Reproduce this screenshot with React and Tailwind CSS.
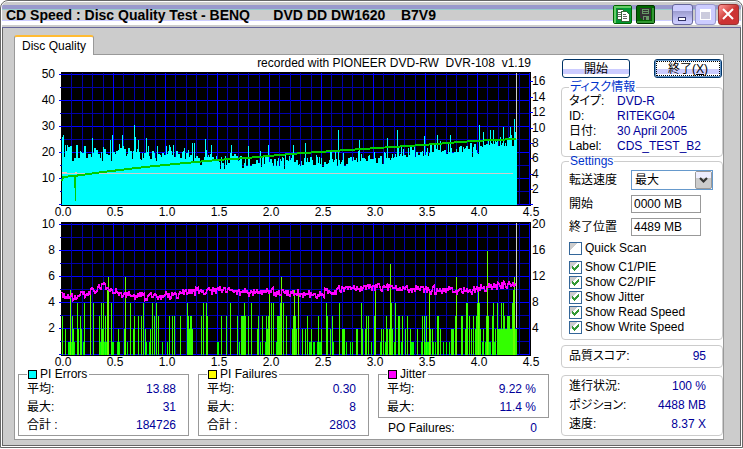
import React, { useState } from 'react';
import clsx from 'clsx';

const COLUMNS_PER_GB = 104;
const PLOT = { left: 46, top: 2, width: 470, height: 134, zeroX: 47, zeroY: 134 };
const COLUMNS = 455;

// Small repeatable noise source, so the curves look the same on every render
function createNoise(seed) {
  let state = seed;
  return () => {
    state = (state * 1664525 + 1013904223) % 4294967296;
    return state / 4294967296;
  };
}

// Linear interpolation through [column, value] points
function interpolate(points, col) {
  for (let i = 1; i < points.length; i++) {
    const [x1, y1] = points[i];
    const [x0, y0] = points[i - 1];
    if (col <= x1) return y0 + ((y1 - y0) * (col - x0)) / (x1 - x0);
  }
  return points[points.length - 1][1];
}

const PIE_TREND = [[0, 46], [60, 47], [90, 48], [130, 42], [165, 40], [210, 40], [240, 40], [300, 41], [330, 45], [380, 51], [410, 49], [430, 56], [454, 58]];
const PIE_SPIKES = {
  0: 63, 1: 65, 3: 55, 5: 55, 30: 62, 48: 60, 50: 65, 60: 65, 72: 75, 73: 63, 76: 60, 84: 62,
  107: 55, 111: 55, 130: 57, 132: 57, 143: 61, 149: 55, 158: 31, 162: 31, 169: 55, 186: 54, 206: 55,
  231: 55, 243: 57, 275: 34, 276: 70, 278: 36, 297: 60, 325: 62, 335: 70, 362: 64, 375: 65,
  388: 65, 417: 75, 421: 68, 428: 70, 431: 70, 441: 73, 448: 73, 452: 81, 453: 68, 454: 66,
};

const PIF_BARS = [
  [0, 3], [3, 2], [6, 1], [7, 1], [8, 5], [9, 1], [10, 3], [11, 2], [12, 1], [15, 4], [16, 2], [18, 3], [19, 2], [22, 4], [21, 1],
  [28, 5], [31, 4], [37, 3], [38, 1], [39, 4], [40, 2], [41, 4], [42, 1], [43, 3], [44, 1], [45, 5], [46, 6], [49, 4], [50, 1], [51, 1],
  [55, 1], [56, 2], [57, 1], [62, 2], [63, 6], [65, 1], [68, 4], [71, 2], [72, 3], [76, 3], [79, 3], [81, 4], [83, 2], [84, 1],
  [87, 1], [88, 2], [90, 4], [92, 3], [94, 4], [96, 3], [100, 1], [105, 1], [107, 3], [110, 3], [112, 3], [118, 3],
  [125, 4], [126, 3], [127, 2], [128, 3], [129, 3], [130, 2], [139, 3], [141, 4], [144, 4], [145, 3], [155, 1], [156, 1],
  [159, 3], [164, 3], [168, 4], [175, 3], [177, 1], [179, 3], [180, 3], [181, 3], [182, 4], [183, 3], [186, 3], [189, 4],
  [195, 2], [196, 3], [198, 1], [200, 3], [203, 1], [204, 3], [205, 2], [206, 3], [207, 5], [209, 4], [211, 4],
  [214, 1], [215, 3], [216, 3], [217, 3], [218, 4], [219, 6], [221, 4], [224, 3],
  [230, 2], [231, 3], [232, 5], [233, 3], [234, 2], [236, 5], [240, 2], [243, 2], [245, 3], [247, 1], [248, 1], [249, 2], [251, 1], [252, 1],
  [255, 1], [256, 3], [257, 1], [258, 1], [259, 2], [264, 4], [265, 3], [268, 2], [270, 3], [271, 1], [277, 4],
  [280, 2], [281, 2], [282, 2], [284, 1], [288, 1], [290, 1], [294, 2], [295, 2], [299, 4], [300, 2], [303, 2], [304, 3], [306, 3], [309, 1],
  [312, 3], [313, 5], [318, 1], [319, 2], [321, 2], [323, 1], [324, 3], [325, 2], [327, 2], [328, 7], [329, 4], [330, 2],
  [332, 1], [333, 4], [336, 3], [337, 3], [339, 1], [340, 3], [343, 2], [345, 3], [348, 2], [349, 1], [350, 1], [351, 1],
  [355, 2], [359, 1], [360, 3], [362, 3], [363, 1], [364, 3], [365, 1], [366, 1], [367, 5], [368, 2], [370, 2], [371, 1], [373, 1],
  [375, 3], [376, 3], [378, 2], [381, 1], [384, 1], [387, 1], [389, 2], [390, 2], [391, 2], [393, 3], [394, 6],
  [399, 3], [400, 3], [403, 2], [404, 4], [405, 4], [407, 3], [409, 2], [411, 3], [413, 2], [414, 3], [415, 4], [416, 5], [417, 4], [418, 2],
  [420, 1], [421, 2], [423, 1], [424, 3], [425, 8], [426, 3], [427, 1], [428, 1], [430, 3], [431, 4], [432, 1], [433, 2], [435, 4], [436, 2],
  [437, 2], [438, 2], [439, 4], [440, 2], [441, 4], [442, 3], [443, 2], [444, 2], [445, 3], [446, 3], [447, 3], [448, 2], [449, 2], [450, 4],
  [451, 5], [452, 6], [453, 2], [454, 2],
];

const JITTER_TREND = [[0, 59], [8, 58], [26, 60], [38, 65], [42, 68], [48, 63], [60, 61], [80, 58], [110, 58], [130, 62], [160, 65], [180, 62], [225, 62], [240, 60], [255, 59], [275, 64], [330, 67], [350, 65], [380, 63], [410, 63], [420, 66], [440, 68], [454, 69]];

const READ_SPEED = [[0, 181], [1, 177], [12, 176], [41, 172], [83, 167], [113, 164], [155, 160], [185, 158], [228, 154], [271, 151], [315, 148], [361, 145], [411, 141], [454, 139]];

function buildPieBars() {
  const noise = createNoise(1620);
  const bars = [];
  let height = 46;
  for (let col = 0; col < COLUMNS; col++) {
    if (col % 2 === 0 || noise() > 0.6) {
      const swing = noise() + noise() - 1;
      height = Math.round(interpolate(PIE_TREND, col) + swing * 10);
    }
    bars.push(PIE_SPIKES[col] ?? height);
  }
  return bars;
}

function buildJitterPath() {
  const noise = createNoise(108);
  const parts = [];
  for (let col = 0; col < COLUMNS; col++) {
    const y = Math.round(PLOT.zeroY - interpolate(JITTER_TREND, col) + (noise() + noise() - 1) * 5);
    parts.push(`${parts.length ? 'L' : 'M'}${PLOT.zeroX + col} ${y}`);
  }
  return parts.join('');
}

const pieBars = buildPieBars();
const jitterPath = buildJitterPath();
const readPath = READ_SPEED.map(([col, y], i) => `${i ? 'L' : 'M'}${PLOT.zeroX + col} ${y - 70}`).join('');

function Chart({ label, leftTicks, rightTicks, children }) {
  const verticals = Array.from({ length: 45 }, (_, i) => i + 1);
  const horizontals = Array.from({ length: 11 }, (_, i) => i);

  return (
    <svg viewBox="0 0 546 148" role="img" aria-label={label} className="block w-full overflow-visible" fontSize="12" shapeRendering="crispEdges">
      <rect x={PLOT.left} y={PLOT.top} width={PLOT.width} height={PLOT.height} fill="#000" />
      {horizontals.map(i => (
        <rect
          key={i}
          x={i % 2 === 0 ? 44 : 45}
          y={PLOT.zeroY - i * 13}
          width="470"
          height="1"
          fill={i % 2 === 0 ? '#0000ff' : '#0000aa'}
        />
      ))}
      {verticals.map(i => (
        <rect
          key={i}
          x={PLOT.zeroX + Math.round((i * COLUMNS_PER_GB) / 10) - 1}
          y={PLOT.top + 1}
          width="1"
          height={PLOT.height - 2}
          fill={i % 5 === 0 ? '#0000ff' : '#0000aa'}
        />
      ))}
      {children}
      <g fill="#000">
        {leftTicks.map(([text, y]) => (
          <text key={text} x="40" y={y + 4} textAnchor="end">{text}</text>
        ))}
        {rightTicks.map(([text, y]) => (
          <text key={text} x="517" y={y + 4}>{text}</text>
        ))}
        {Array.from({ length: 10 }, (_, i) => (
          <text key={i} x={48 + i * 52} y="146" textAnchor="middle">{(i / 2).toFixed(1)}</text>
        ))}
      </g>
    </svg>
  );
}

function ErrorsChart() {
  return (
    <Chart
      label="PI Errors and transfer speed"
      leftTicks={[['50', 4], ['40', 30], ['30', 56], ['20', 82], ['10', 108]]}
      rightTicks={[['16', 11], ['14', 27], ['12', 42], ['10', 58], ['8', 73], ['6', 88], ['4', 104], ['2', 119]]}
    >
      {pieBars.map((h, col) => (
        <rect key={col} x={PLOT.zeroX + col} y={PLOT.zeroY - 4 - h} width="1" height={h + 5} fill="#00ffff" />
      ))}
      <rect x="47" y="103" width="451" height="1" fill="#cccccc" />
      <path d="M47 102h5M60 102h2M79 102h4M85 102h4" stroke="#ffc0c0" fill="none" />
      <path d={readPath} fill="none" stroke="#00cc00" strokeWidth="2" />
      <path d="M59 105h1v13h-1zM60 105h1v26h-1z" fill="#00cc00" />
      <rect x="501" y="3" width="1" height="66" fill="#cccccc" />
      <path d="M514 11h4M514 27h4M514 42h4M514 58h4M514 73h4M514 88h4M514 104h4M514 119h4M514 134h4" stroke="#0000ff" />
    </Chart>
  );
}

function FailuresChart() {
  return (
    <Chart
      label="PI Failures and jitter"
      leftTicks={[['10', 4], ['8', 30], ['6', 56], ['4', 82], ['2', 108]]}
      rightTicks={[['20', 4], ['16', 30], ['12', 56], ['8', 82], ['4', 108]]}
    >
      {PIF_BARS.map(([col, count]) => (
        <rect
          key={col}
          x={PLOT.zeroX + col}
          y={PLOT.zeroY + 1 - count * 13}
          width="1"
          height={count * 13}
          fill={count === 1 ? '#00ff00' : count > 4 ? '#66ff00' : '#33ff00'}
        />
      ))}
      <path d={jitterPath} fill="none" stroke="#ff00ff" strokeWidth="1.5" />
      <rect x="501" y="3" width="1" height="105" fill="#cccccc" />
    </Chart>
  );
}

function StatGroup({ title, swatch, rows }) {
  return (
    <fieldset className="min-w-0 border border-[#999999] px-2 pb-px">
      <legend className="flex items-center gap-1 px-[2px] leading-3">
        <span className={clsx('-m-px box-content size-[7px] border border-black', swatch)} />
        {title}
      </legend>
      <dl>
        {rows.map(([name, value]) => (
          <div key={name} className="flex h-[18px] items-center justify-between pr-1">
            <dt>{name}</dt>
            <dd className="text-[#000099]">{value}</dd>
          </div>
        ))}
      </dl>
    </fieldset>
  );
}

function CheckOption({ label, checked, onChange }) {
  return (
    <label className="flex h-[15px] items-center gap-[3px]">
      <span className="relative block size-[13px]">
        <input
          type="checkbox"
          checked={checked}
          onChange={onChange}
          className="block size-[13px] appearance-none border border-[#336699] bg-[linear-gradient(135deg,#ccc_35%,#fff_35%)]"
        />
        {checked && (
          <svg viewBox="0 0 13 13" className="pointer-events-none absolute inset-0 size-[13px]" shapeRendering="crispEdges">
            <path d="M3 5v3h1v1h1v1h1V9h1V8h1V7h1V6h1V3H9v1H8v1H7v1H6v1H5V6H4V5z" fill="#339933" />
          </svg>
        )}
      </span>
      {label}
    </label>
  );
}

function PushButton({ focused, children }) {
  return (
    <button
      type="button"
      className={clsx(
        'flex h-[19px] w-[68px] items-center justify-center rounded-[3px] border border-[#003366] bg-[linear-gradient(#fff_55%,#ccf_55%,#ccf_80%,#fff_80%)] leading-4',
        focused && 'shadow-[inset_0_0_0_1px_#6699cc] outline-1 -outline-offset-3 outline-dotted outline-black'
      )}
    >
      {children}
    </button>
  );
}

function TitleBar() {
  return (
    <header className="flex h-[26px] items-center rounded-t-[5px] border-b border-[#666699] bg-[linear-gradient(#ccc_3px,#99c_3px_7px,#9cc_7px_8px,#ccc_8px_18px,#ccf_18px_19px,#fff_19px_23px,#ccc_23px)] pr-[2px] pl-1">
      <h1 className="min-w-0 flex-1 overflow-hidden text-[14px] leading-4 font-bold whitespace-pre">
        CD Speed : Disc Quality Test - BENQ{'      '}DVD DD DW1620{'    '}B7V9
      </h1>
      <div className="flex items-center gap-1 pr-[17px]">
        <button type="button" aria-label="Copy" className="size-[19px] rounded-[2px] border border-[#006600] bg-[#009933]">
          <svg viewBox="0 0 17 17" className="size-[17px]" shapeRendering="crispEdges">
            <path d="M0 0h17v2H2v15H0z" fill="#66cc66" />
            <path d="M3 3h5l2 2v8H3z" fill="#fff" stroke="#336633" />
            <path d="M4 6h3M4 8h3M4 10h3" stroke="#666" />
            <path d="M7 5h5l3 3v7H7z" fill="#fff" stroke="#336633" />
            <path d="M9 8h3M9 10h4M9 12h4" stroke="#666" />
          </svg>
        </button>
        <button type="button" aria-label="Save" className="size-[19px] rounded-[2px] border border-[#003300] bg-[#006600]">
          <svg viewBox="0 0 17 17" className="size-[17px]" shapeRendering="crispEdges">
            <path d="M0 15h17v2H0zM15 2h2v15h-2z" fill="#339933" />
            <path d="M3 2h11v12H5l-2-2z" fill="#333333" />
            <path d="M5 3h7v5H5zM6 10h6v4H6z" fill="#669966" />
            <path d="M6 4h5v1H6zM6 6h5v1H6zM7 11h2v3H7z" fill="#333333" />
          </svg>
        </button>
      </div>
      <div className="flex items-center gap-[2px]">
        <button type="button" aria-label="Minimize" className="size-[21px] rounded-[3px] border border-[#666699] bg-[linear-gradient(#ccf_30%,#99c_30%,#ccf_90%)]">
          <svg viewBox="0 0 19 19" className="size-[19px]" shapeRendering="crispEdges">
            <path d="M5 12h7v3H5z" fill="#fff" stroke="#333366" />
          </svg>
        </button>
        <button type="button" aria-label="Maximize" disabled className="size-[21px] rounded-[3px] border border-[#9999cc] bg-[#ccccff]">
          <svg viewBox="0 0 19 19" className="size-[19px]" shapeRendering="crispEdges">
            <path d="M4 4h11v11H4z" fill="#fff" />
            <path d="M5 7h9v7H5z" fill="#ccccdd" />
          </svg>
        </button>
        <button type="button" aria-label="Close" className="size-[21px] rounded-[3px] border border-[#993333] bg-linear-to-br from-[#ff9999] to-[#cc3333] to-50%">
          <svg viewBox="0 0 19 19" className="size-[19px]">
            <path d="M4 4l10 10M14 4l-10 10" stroke="#fff" strokeWidth="2" />
          </svg>
        </button>
      </div>
    </header>
  );
}

export default function App() {
  const [speed, setSpeed] = useState('max');
  const [start, setStart] = useState('0000 MB');
  const [end, setEnd] = useState('4489 MB');
  const [options, setOptions] = useState({
    'Quick Scan': false,
    'Show C1/PIE': true,
    'Show C2/PIF': true,
    'Show Jitter': true,
    'Show Read Speed': true,
    'Show Write Speed': true,
  });

  const toggle = name => setOptions({ ...options, [name]: !options[name] });

  const groupClass = 'min-w-0 rounded-[4px] border border-[#cccccc] pl-[7px]';
  const fieldClass = 'h-[18px] w-[70px] border border-[#999999] bg-white px-[2px] leading-4';

  return (
    <div className="rounded-t-lg border border-[#666666] bg-white p-px font-['Liberation_Sans','Noto_Sans_CJK_JP',sans-serif] text-[12px] leading-[15px] text-black [font-feature-settings:'palt']">
      <TitleBar />
      <main className="border border-t-0 border-[#666666] bg-[#cccccc] pt-[7px] pr-4 pb-[5px] pl-[11px]">
        <div role="tablist" className="flex">
          <button
            type="button"
            role="tab"
            aria-selected="true"
            className="z-10 -mb-px h-5 rounded-t-[3px] border border-t-2 border-b-0 border-[#999999] border-t-[#ffbb33] bg-white px-[7px] leading-[15px]"
          >
            Disc Quality
          </button>
        </div>

        <div className="flex border border-[#999999] bg-white">
          <section className="min-w-0 flex-1 pb-[3px]">
            <p className="pt-[2px] pr-[30px] text-right leading-[13px] whitespace-pre">recorded with PIONEER DVD-RW  DVR-108  v1.19</p>
            <ErrorsChart />
            <div className="pt-[2px]">
              <FailuresChart />
            </div>

            <div className="grid grid-cols-3 items-start gap-[9px] pr-3 pl-[3px]">
              <StatGroup title="PI Errors" swatch="bg-[#00ffff]" rows={[['平均:', '13.88'], ['最大:', '31'], ['合計 :', '184726']]} />
              <StatGroup title="PI Failures" swatch="bg-[#ffff00]" rows={[['平均:', '0.30'], ['最大:', '8'], ['合計 :', '2803']]} />
              <div>
                <StatGroup title="Jitter" swatch="bg-[#ff00ff]" rows={[['平均:', '9.22 %'], ['最大:', '11.4 %']]} />
                <p className="flex justify-between pt-[3px] pr-3 pl-[10px]">
                  <span>PO Failures:</span>
                  <span className="text-[#000099]">0</span>
                </p>
              </div>
            </div>
          </section>

          <aside className="w-[162px] shrink-0 pt-1">
            <div className="flex justify-between px-px">
              <PushButton>開始</PushButton>
              <PushButton focused>終了(<u>X</u>)</PushButton>
            </div>

            <fieldset className={clsx(groupClass, 'mt-[2px] pb-[2px]')}>
              <legend className="px-px leading-[14px] text-[#0033cc]">ディスク情報</legend>
              <dl className="grid grid-cols-[48px_1fr]">
                <dt>タイプ:</dt>
                <dd className="text-[#000099]">DVD-R</dd>
                <dt>ID:</dt>
                <dd className="text-[#000099]">RITEKG04</dd>
                <dt>日付:</dt>
                <dd className="text-[#000099]">30 April 2005</dd>
                <dt>Label:</dt>
                <dd className="text-[#000099]">CDS_TEST_B2</dd>
              </dl>
            </fieldset>

            <fieldset className={clsx(groupClass, '-mt-[3px] pb-1')}>
              <legend className="px-px leading-[14px] text-[#0033cc]">Settings</legend>
              <div className="grid grid-cols-[62px_1fr] items-center gap-y-[5px] pt-[2px]">
                <label htmlFor="speed">転送速度</label>
                <div className="relative w-[82px]">
                  <select
                    id="speed"
                    value={speed}
                    onChange={e => setSpeed(e.target.value)}
                    className="block h-5 w-full appearance-none border border-[#6699cc] bg-white pl-[3px] leading-4"
                  >
                    <option value="max">最大</option>
                  </select>
                  <svg viewBox="0 0 17 18" className="pointer-events-none absolute top-px right-px h-[18px] w-[17px]">
                    <rect x="0.5" y="0.5" width="16" height="17" rx="1.5" fill="#cccccc" stroke="#999999" />
                    <path d="M1 1h15v6H1z" fill="#eeeeff" />
                    <path d="M5 7l3.500 3.500L12 7" fill="none" stroke="#333" strokeWidth="2.200" />
                  </svg>
                </div>
                <label htmlFor="start">開始</label>
                <input id="start" type="text" value={start} onChange={e => setStart(e.target.value)} className={fieldClass} />
                <label htmlFor="end">終了位置</label>
                <input id="end" type="text" value={end} onChange={e => setEnd(e.target.value)} className={fieldClass} />
              </div>
              <div className="pt-[5px]">
                {Object.keys(options).map(name => (
                  <div key={name} className="first:pb-1">
                    <CheckOption label={name} checked={options[name]} onChange={() => toggle(name)} />
                  </div>
                ))}
              </div>
            </fieldset>

            <dl className={clsx(groupClass, 'mt-[5px] flex h-[23px] items-center justify-between pr-4')}>
              <dt>品質スコア:</dt>
              <dd className="text-[#000099]">95</dd>
            </dl>

            <dl className={clsx(groupClass, 'mt-[7px] py-px pr-4')}>
              {[['進行状況:', '100 %'], ['ポジション:', '4488 MB'], ['速度:', '8.37 X']].map(([name, value]) => (
                <div key={name} className="flex h-[19px] items-center justify-between">
                  <dt>{name}</dt>
                  <dd className="text-[#000099]">{value}</dd>
                </div>
              ))}
            </dl>
          </aside>
        </div>
      </main>
    </div>
  );
}
